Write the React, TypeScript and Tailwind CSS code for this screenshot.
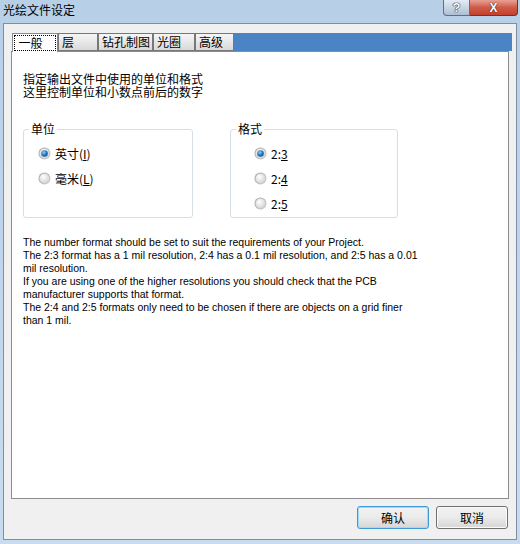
import React from "react";

const TABS = ["一般", "层", "钻孔制图", "光圈", "高级"];
const TAB_WIDTHS = ["w-[46px]", "w-[40px]", "w-[55px]", "w-[42px]", "w-[39px]"];

const NOTES = [
  "The number format should be set to suit the requirements of your Project.",
  "The 2:3 format has a 1 mil resolution, 2:4 has a 0.1 mil resolution, and 2:5 has a 0.01",
  "mil resolution.",
  "If you are using one of the higher resolutions you should check that the PCB",
  "manufacturer supports that format.",
  "The 2:4 and 2:5 formats only need to be chosen if there are objects on a grid finer",
  "than 1 mil.",
];

function Radio({ checked }: { checked?: boolean }) {
  return (
    <svg width="13" height="13" viewBox="0 0 13 13" className="shrink-0">
      <defs>
        <linearGradient id="rg-ring" x1="0" y1="0" x2="1" y2="1">
          <stop offset="0" stopColor="#a0a0a0" />
          <stop offset="1" stopColor="#d0d0d0" />
        </linearGradient>
        <radialGradient id="rg-in" cx="0.4" cy="0.35" r="0.7">
          <stop offset="0" stopColor="#ffffff" />
          <stop offset="1" stopColor="#cfcfcf" />
        </radialGradient>
        <radialGradient id="rg-dot" cx="0.4" cy="0.35" r="0.7">
          <stop offset="0" stopColor="#8fd0f8" />
          <stop offset="0.6" stopColor="#1f75c0" />
          <stop offset="1" stopColor="#174f86" />
        </radialGradient>
      </defs>
      <circle cx="6.5" cy="6.5" r="6" fill="url(#rg-ring)" />
      <circle cx="6.5" cy="6.5" r="5" fill="url(#rg-in)" />
      {checked && <circle cx="6.5" cy="6.5" r="3.3" fill="url(#rg-dot)" />}
    </svg>
  );
}

function Option({ label, hot, rest, checked }: { label: string; hot: string; rest?: string; checked?: boolean }) {
  return (
    <div className="flex h-[13px] items-center gap-[4px]">
      <Radio checked={checked} />
      <span className="whitespace-nowrap text-[12px] leading-[13px] text-black">
        {label}
        <span className="underline">{hot}</span>
        {rest}
      </span>
    </div>
  );
}

function Group({ title, width, pad, children }: { title: string; width: string; pad: string; children: React.ReactNode }) {
  return (
    <div className={`relative h-[89px] rounded-[3px] border border-[#d5dfe5] ${width} ${pad}`}>
      <span className="absolute left-[5px] top-[-8px] bg-white px-[2px] text-[12px] leading-[14px] text-black">
        {title}
      </span>
      <div className="flex flex-col gap-[12px] pt-[17px]">{children}</div>
    </div>
  );
}

function WinButton({ label, isDefault }: { label: string; isDefault?: boolean }) {
  return (
    <button
      className={`h-[23px] w-[72px] rounded-[3px] border bg-gradient-to-b from-[#f2f2f2] via-[#ebebeb] to-[#d6d6d6] text-[12px] leading-none text-black ${
        isDefault ? "border-[#3c9ad6] shadow-[inset_0_0_0_1px_#9fdcf7]" : "border-[#707070] shadow-[inset_0_0_0_1px_#fbfbfb]"
      }`}
    >
      {label}
    </button>
  );
}

export default function App() {
  return (
    <div className="flex h-[544px] w-[520px] flex-col bg-gradient-to-b from-[#b8cfe8] to-[#c9dcef] font-['Noto_Sans_CJK_SC',sans-serif]">
      {/* title bar */}
      <div className="relative h-[23px] shrink-0">
        <span className="absolute left-[3px] top-[3px] text-[12px] leading-[14px] text-black">光绘文件设定</span>
        <div className="absolute right-[2px] top-0 flex h-[16px]">
          <div className="flex w-[27px] items-center justify-center rounded-bl-[4px] border border-t-0 border-[#5e6f82] bg-gradient-to-b from-[#e3ecf5] to-[#aebfd3] font-['Liberation_Sans',sans-serif] text-[13px] font-bold leading-none text-white [text-shadow:0_0_1px_#1e2c3a,0_0_1px_#1e2c3a,0_0_1px_#1e2c3a]">
            ?
          </div>
          <div className="flex w-[48px] items-center justify-center rounded-br-[4px] border border-l-0 border-t-0 border-[#5e3a34] bg-gradient-to-b from-[#e7a193] via-[#cf5a48] to-[#c4402c] font-['Liberation_Sans',sans-serif] text-[12px] font-bold leading-none text-white [text-shadow:0_0_1px_#3a1a14,0_0_1px_#3a1a14]">
            X
          </div>
        </div>
      </div>

      {/* client area */}
      <div className="mx-[3px] mb-[4px] flex flex-1 flex-col border border-[#7f8fa3] bg-[#f0f0f0] px-[7px] pb-[10px] pt-[9px]">
        {/* tab strip */}
        <div className="relative z-10 -mr-[3px] ml-[1px] flex h-[18px] bg-[#4a84c4]">
          {TABS.map((t, i) =>
            i === 0 ? (
              <div
                key={t}
                className={`${TAB_WIDTHS[i]} flex h-[19px] items-start justify-center border border-b-0 border-[#8a8a8a] bg-white pt-[1px]`}
              >
                <span className="border border-dotted border-black pl-[3px] pr-[12px] text-[12px] leading-[14px] text-black">{t}</span>
              </div>
            ) : (
              <div
                key={t}
                className={`${TAB_WIDTHS[i]} flex h-[18px] items-center border border-[#777777] bg-gradient-to-b from-[#f6f6f6] to-[#d9d9d9] pl-[3px] text-[12px] leading-[14px] text-black`}
              >
                {t}
              </div>
            )
          )}
        </div>

        {/* page */}
        <div className="flex-1 border border-[#8c8c8c] bg-white pl-[11px] pt-[20px]">
          <p className="text-[12px] leading-[13px] text-black">
            指定输出文件中使用的单位和格式
            <br />
            这里控制单位和小数点前后的数字
          </p>

          <div className="mt-[31px] flex items-start gap-[37px]">
            <Group title="单位" width="w-[170px]" pad="pl-[14px]">
              <Option label="英寸(" hot="I" rest=")" checked />
              <Option label="毫米(" hot="L" rest=")" />
            </Group>
            <Group title="格式" width="w-[168px]" pad="pl-[23px]">
              <Option label="2:" hot="3" checked />
              <Option label="2:" hot="4" />
              <Option label="2:" hot="5" />
            </Group>
          </div>

          <div className="mt-[18px] font-['Liberation_Sans',sans-serif] text-[10.5px] leading-[13px] text-black">
            {NOTES.map((n) => (
              <div key={n} className="whitespace-nowrap">
                {n}
              </div>
            ))}
          </div>
        </div>

        {/* buttons */}
        <div className="mt-[7px] flex justify-end gap-[7px] pr-[1px]">
          <WinButton label="确认" isDefault />
          <WinButton label="取消" />
        </div>
      </div>
    </div>
  );
}
